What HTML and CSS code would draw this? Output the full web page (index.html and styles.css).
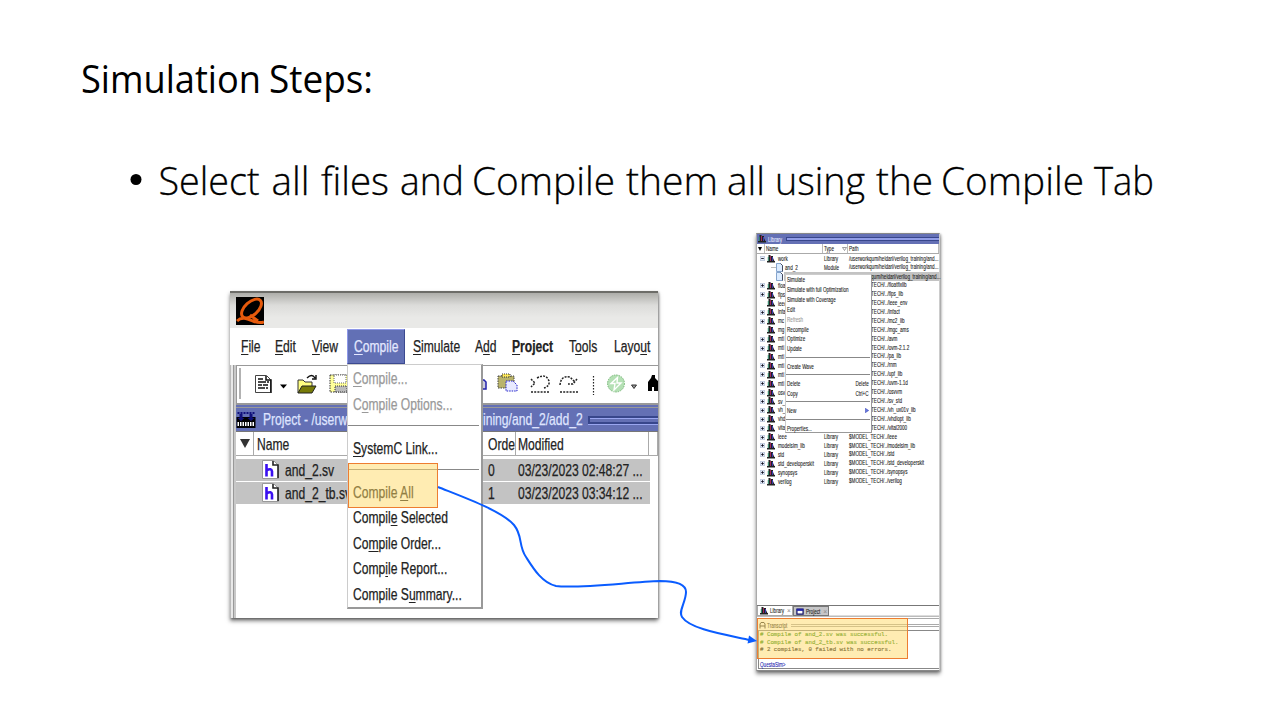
FILE: index.html
```html
<!DOCTYPE html>
<html lang="en">
<head>
<meta charset="utf-8">
<title>Simulation Steps</title>
<link rel="stylesheet" href="styles.css">
</head>
<body>
<svg class="defs" width="0" height="0" aria-hidden="true">
  <symbol id="books" viewBox="0 0 8 8"><path fill="#222" d="M1.500 0h2v7h-2zM4 1h2v6H4zM0 6h8v1.600H0z"/><path fill="#2a8a6a" d="M.8 2h1v4h-1z"/><path fill="#a02860" d="M3 1h1v5H3z"/><path fill="#3a3ab0" d="M5 2h1v4H5z"/><path fill="#222" d="M6 3l1.800 4H6z"/></symbol>
  <symbol id="plus" viewBox="0 0 5 5"><path fill="#e4ebf8" stroke="#9aa9c8" stroke-width=".6" d="M.3.3h4.400v4.400H.3z"/><path stroke="#112" stroke-width=".9" d="M1.200 2.500h2.600M2.500 1.200v2.600"/></symbol>
  <symbol id="minus" viewBox="0 0 5 5"><path fill="#e4ebf8" stroke="#9aa9c8" stroke-width=".6" d="M.3.3h4.400v4.400H.3z"/><path stroke="#112" stroke-width=".9" d="M1.200 2.500h2.600"/></symbol>
  <symbol id="page" viewBox="0 0 7 9"><path fill="#dcecff" stroke="#6a8fc0" stroke-width=".8" d="M.5.5h4l2 2v6h-6z"/><path fill="none" stroke="#334" stroke-width=".8" d="M4.500.5l2 2v6"/></symbol>
  <symbol id="hfile" viewBox="0 0 17 19"><path fill="#fff" stroke="#999" d="M.5.5h11l5 5v13H.5z"/><path fill="none" stroke="#222" stroke-width="1.600" d="M11 1v4h5v13"/><path fill="none" stroke="#3a10f0" stroke-width="2.600" d="M4.500 4v12.500M4.500 10.500q5-3 5.500 1v5"/></symbol>
  <symbol id="factory" viewBox="0 0 19 17"><path fill="#000" d="M0 6h19v11H0z"/><path fill="#6470b5" d="M0 0h19v6H0z"/><path stroke="#10107a" stroke-width="2" stroke-dasharray="2 1" d="M1 2h17"/><path fill="#10107a" d="M3 3h3v4h2l-3.500 3L1 7h2zM13 3h3v4h2l-3.500 3L11 7h2z"/><path stroke="#fff" stroke-width="4" stroke-dasharray="1.500 1" d="M1 13h17"/></symbol>
</svg>
<main class="slide">
  <svg class="title" width="1180" height="60"><text y="42.500" lengthAdjust="spacingAndGlyphs"><tspan x="1" textLength="180" lengthAdjust="spacingAndGlyphs">Simulation</tspan> <tspan x="189" textLength="104" lengthAdjust="spacingAndGlyphs">Steps:</tspan></text></svg>
  <svg class="bullet" width="1100" height="60"><circle cx="7" cy="29.500" r="5.500"/>
    <text x="29.500" y="44.500" textLength="101" lengthAdjust="spacingAndGlyphs">Select</text>
    <text x="142.500" y="44.500" textLength="38" lengthAdjust="spacingAndGlyphs">all</text>
    <text x="192" y="44.500" textLength="68" lengthAdjust="spacingAndGlyphs">files</text>
    <text x="271" y="44.500" textLength="64" lengthAdjust="spacingAndGlyphs">and</text>
    <text x="343" y="44.500" textLength="143" lengthAdjust="spacingAndGlyphs">Compile</text>
    <text x="497" y="44.500" textLength="92" lengthAdjust="spacingAndGlyphs">them</text>
    <text x="598" y="44.500" textLength="38" lengthAdjust="spacingAndGlyphs">all</text>
    <text x="646" y="44.500" textLength="90" lengthAdjust="spacingAndGlyphs">using</text>
    <text x="747" y="44.500" textLength="57" lengthAdjust="spacingAndGlyphs">the</text>
    <text x="812" y="44.500" textLength="143" lengthAdjust="spacingAndGlyphs">Compile</text>
    <text x="965" y="44.500" textLength="60" lengthAdjust="spacingAndGlyphs">Tab</text></svg>

  <div class="figures">
    <section class="window">
      <div class="titlebar"><svg width="28" height="28" viewBox="0 0 28 28"><path d="M0 0h28v28H0z"/><g fill="none" stroke="#e65a0c" stroke-width="3"><ellipse cx="15.500" cy="11.500" rx="12" ry="6.500" transform="rotate(-42 15.500 11.500)"/><path d="M1 24c5-5 11-2 16 0s8 2 11 1M14 18l8 6"/></g></svg></div>
      <nav class="menubar">
        <span><b class="t"><u>F</u>ile</b></span><span><b class="t"><u>E</u>dit</b></span><span><b class="t"><u>V</u>iew</b></span><span class="open"><b class="t"><u>C</u>ompile</b></span><span class="after"><b class="t"><u>S</u>imulate</b></span><span><b class="t">A<u>d</u>d</b></span><span><b class="t bold"><u>P</u>roject</b></span><span><b class="t">T<u>o</u>ols</b></span><span><b class="t">Layo<u>u</u>t</b></span>
      </nav>
      <div class="toolbar">
        <svg width="422" height="36" viewBox="236 367 422 36">
          <path stroke="#999" stroke-width="1.500" d="M240 369v31"/>
          <path fill="#fff" stroke="#444" d="M255.500 376.500h11l4 4v13h-15z"/><path fill="none" stroke="#111" stroke-width="1.500" d="M266 377v4h5v13M258 380h5M258 383h8m1 0h2M258 386h4m1 0h5M258 389h7m1 0h2"/>
          <path d="M280 385.500h7l-3.500 4z"/>
          <path fill="#ffff80" stroke="#333" d="M298 394v-13h5l2 2h7v4"/><path fill="#777b08" stroke="#222" d="M298 394l4-7h14l-4 7z"/><path fill="none" stroke="#111" stroke-width="1.400" d="M307 379q5-5 8 0m1-3v4h-4"/>
          <path fill="#ffff9a" stroke="#333" stroke-dasharray="1.500 1" d="M330 376h20v17h-20z"/><path fill="#fff" stroke="#666" stroke-dasharray="1 1" d="M334 376h12v8h-12z"/><path fill="#bbb" stroke="#333" stroke-dasharray="1 1" d="M335 387h12v6h-12z"/>
          <path fill="#ccd" stroke="#2222aa" stroke-width="1.500" d="M478 381h6l2 2v7h-8z"/>
          <path fill="#b9b36a" stroke="#444" stroke-dasharray="1.500 1" d="M498 377h16v12h-16z"/><path fill="#ffe95a" stroke="#333" stroke-dasharray="1 1" d="M502 375h8v3h-8z"/><path fill="#e8eaff" stroke="#2222cc" stroke-dasharray="1.500 1" d="M506 382h7l4 4v6h-11z"/>
          <g fill="none" stroke="#222" stroke-width="1.500" stroke-dasharray="2 1.200"><path d="M537 379q9-5 12 3 1 5-5 7M531 380l4 4-4 4M531 393h19"/><path d="M560 386q1-10 10-8l5 5M577 380l-4 5h-5M560 393h19"/></g>
          <path stroke="#222" stroke-width="1.200" stroke-dasharray="1.500 1.500" d="M593.500 377v19"/>
          <circle cx="616" cy="384.500" r="8.500" fill="#b4e0b4" stroke="#76b676" stroke-dasharray="1.500 1"/><path fill="#b4e0b4" stroke="#fff" stroke-width="1.400" d="M617.500 378.500l-6.500 6h4l-1 6.500 7-7h-4z"/>
          <path fill="#999" stroke="#333" d="M631.500 386h5l-2.500 3.500z"/>
          <path d="M652 376h3v3l3 3v10h-4v-4h-2v4h-4v-9l3-4z"/>
        </svg>
      </div>
      <div class="project-head"><svg width="20" height="17"><use href="#factory"/></svg><span class="p1"><b class="t">Project - /userw</b></span><span class="p2"><b class="t">ining/and_2/add_2</b></span><i class="grip"></i></div>
      <div class="cols head"><span class="sort"><svg width="10" height="9"><path fill="#333" d="M0 0h10L5 9z"/></svg></span><span class="name"><b class="t">Name</b></span><span class="order"><b class="t">Orde</b></span><span class="mod"><b class="t">Modified</b></span><span></span></div>
      <div class="file"><svg width="17" height="19"><use href="#hfile"/></svg><span class="fname"><b class="t">and_2.sv</b></span><span class="ford"><b class="t">0</b></span><b class="t">03/23/2023 02:48:27 ...</b></div>
      <div class="file"><svg width="17" height="19"><use href="#hfile"/></svg><span class="fname"><b class="t">and_2_tb.sv</b></span><span class="ford"><b class="t">1</b></span><b class="t">03/23/2023 03:34:12 ...</b></div>
      <div class="dropdown">
        <p class="off"><b class="t"><u>C</u>ompile...</b></p><p class="off"><b class="t">C<u>o</u>mpile Options...</b></p><hr>
        <p><b class="t"><u>S</u>ystemC Link...</b></p><hr>
        <p><b class="t">Compile <u>A</u>ll</b></p><p><b class="t">Compil<u>e</u> Selected</b></p><p><b class="t">Co<u>m</u>pile Order...</b></p><p><b class="t">Comp<u>i</u>le Report...</b></p><p><b class="t">Compile S<u>u</u>mmary...</b></p>
      </div>
      <div class="mark mark-all"></div>
    </section>

    <section class="library">
      <div class="lib-title"><svg width="8" height="8"><use href="#books"/></svg><b class="t">Library</b><i class="grip"></i></div>
      <div class="lib-head"><span class="c0"><svg width="4" height="4"><path d="M0 0h4L2 4z"/></svg></span><span class="c1"><b class="t">Name</b></span><span class="c2"><b class="t">Type</b><svg width="5" height="4"><path fill="none" stroke="#777" stroke-width=".7" d="M.5.5h4L2.500 3.500z"/></svg></span><span class="c3"><b class="t">Path</b></span></div>
      <div class="tree">
        <div class="row"><svg class="x"><use href="#minus"/></svg><svg class="k"><use href="#books"/></svg><span class="n"><b class="t">work</b></span><span class="ty"><b class="t">Library</b></span><b class="t">/userworkqum/heidari/verilog_training/and...</b></div>
        <div class="row child"><svg class="pg"><use href="#page"/></svg><span class="n"><b class="t">and_2</b></span><span class="ty"><b class="t">Module</b></span><b class="t">/userworkqum/heidari/verilog_training/and...</b></div>
        <div class="row child sel"><svg class="pg"><use href="#page"/></svg><span class="cut"><b class="t">qum/heidari/verilog_training/and...</b></span></div>
        <div class="row"><svg class="x"><use href="#plus"/></svg><svg class="k"><use href="#books"/></svg><span class="s"><b class="t">floa</b></span><b class="t">TECH/../floatfixlib</b></div>
        <div class="row"><svg class="x"><use href="#plus"/></svg><svg class="k"><use href="#books"/></svg><span class="s"><b class="t">flps</b></span><b class="t">TECH/../flps_lib</b></div>
        <div class="row"><svg class="x"></svg><svg class="k"><use href="#books"/></svg><span class="s"><b class="t">ieee</b></span><b class="t">TECH/../ieee_env</b></div>
        <div class="row"><svg class="x"><use href="#plus"/></svg><svg class="k"><use href="#books"/></svg><span class="s"><b class="t">infa</b></span><b class="t">TECH/../infact</b></div>
        <div class="row"><svg class="x"><use href="#plus"/></svg><svg class="k"><use href="#books"/></svg><span class="s"><b class="t">mc</b></span><b class="t">TECH/../mc2_lib</b></div>
        <div class="row"><svg class="x"></svg><svg class="k"><use href="#books"/></svg><span class="s"><b class="t">mg</b></span><b class="t">TECH/../mgc_ams</b></div>
        <div class="row"><svg class="x"><use href="#plus"/></svg><svg class="k"><use href="#books"/></svg><span class="s"><b class="t">mti</b></span><b class="t">TECH/../avm</b></div>
        <div class="row"><svg class="x"><use href="#plus"/></svg><svg class="k"><use href="#books"/></svg><span class="s"><b class="t">mti</b></span><b class="t">TECH/../ovm-2.1.2</b></div>
        <div class="row"><svg class="x"></svg><svg class="k"><use href="#books"/></svg><span class="s"><b class="t">mti</b></span><b class="t">TECH/../pa_lib</b></div>
        <div class="row"><svg class="x"><use href="#plus"/></svg><svg class="k"><use href="#books"/></svg><span class="s"><b class="t">mti</b></span><b class="t">TECH/../rnm</b></div>
        <div class="row"><svg class="x"><use href="#plus"/></svg><svg class="k"><use href="#books"/></svg><span class="s"><b class="t">mti</b></span><b class="t">TECH/../upf_lib</b></div>
        <div class="row"><svg class="x"><use href="#plus"/></svg><svg class="k"><use href="#books"/></svg><span class="s"><b class="t">mti</b></span><b class="t">TECH/../uvm-1.1d</b></div>
        <div class="row"><svg class="x"><use href="#plus"/></svg><svg class="k"><use href="#books"/></svg><span class="s"><b class="t">osv</b></span><b class="t">TECH/../osvvm</b></div>
        <div class="row"><svg class="x"><use href="#plus"/></svg><svg class="k"><use href="#books"/></svg><span class="s"><b class="t">sv_</b></span><b class="t">TECH/../sv_std</b></div>
        <div class="row"><svg class="x"><use href="#plus"/></svg><svg class="k"><use href="#books"/></svg><span class="s"><b class="t">vh_</b></span><b class="t">TECH/../vh_ux01v_lib</b></div>
        <div class="row"><svg class="x"><use href="#plus"/></svg><svg class="k"><use href="#books"/></svg><span class="s"><b class="t">vhd</b></span><b class="t">TECH/../vhdlopt_lib</b></div>
        <div class="row"><svg class="x"><use href="#plus"/></svg><svg class="k"><use href="#books"/></svg><span class="s"><b class="t">vita</b></span><b class="t">TECH/../vital2000</b></div>
        <div class="row"><svg class="x"><use href="#plus"/></svg><svg class="k"><use href="#books"/></svg><span class="n"><b class="t">ieee</b></span><span class="ty"><b class="t">Library</b></span><b class="t">$MODEL_TECH/../ieee</b></div>
        <div class="row"><svg class="x"><use href="#plus"/></svg><svg class="k"><use href="#books"/></svg><span class="n"><b class="t">modelsim_lib</b></span><span class="ty"><b class="t">Library</b></span><b class="t">$MODEL_TECH/../modelsim_lib</b></div>
        <div class="row"><svg class="x"><use href="#plus"/></svg><svg class="k"><use href="#books"/></svg><span class="n"><b class="t">std</b></span><span class="ty"><b class="t">Library</b></span><b class="t">$MODEL_TECH/../std</b></div>
        <div class="row"><svg class="x"><use href="#plus"/></svg><svg class="k"><use href="#books"/></svg><span class="n"><b class="t">std_developerskit</b></span><span class="ty"><b class="t">Library</b></span><b class="t">$MODEL_TECH/../std_developerskit</b></div>
        <div class="row"><svg class="x"><use href="#plus"/></svg><svg class="k"><use href="#books"/></svg><span class="n"><b class="t">synopsys</b></span><span class="ty"><b class="t">Library</b></span><b class="t">$MODEL_TECH/../synopsys</b></div>
        <div class="row"><svg class="x"><use href="#plus"/></svg><svg class="k"><use href="#books"/></svg><span class="n"><b class="t">verilog</b></span><span class="ty"><b class="t">Library</b></span><b class="t">$MODEL_TECH/../verilog</b></div>
      </div>
      <div class="tabs"><span class="tab"><svg width="8" height="8"><use href="#books"/></svg><b class="t">Library</b><em>×</em></span><span class="tab idle"><svg width="8" height="7" viewBox="0 0 19 17"><path fill="#fff" stroke="#111166" stroke-width="3" d="M2 3h15v12H2z"/><path fill="#22a" d="M2 2h15v5H2z"/></svg><b class="t">Project</b><em>×</em></span></div>
      <div class="tr-head"><svg width="7" height="7"><path fill="none" stroke="#333" d="M1 6.500V2l1-1.500h3L6 2v4.500M1 4h5"/></svg><b class="t">Transcript</b><i class="grip"></i></div>
      <div class="console">
        <p># Compile of and_2.sv was successful.</p><p># Compile of and_2_tb.sv was successful.</p><p class="dark"># 2 compiles, 0 failed with no errors.</p>
        <div class="prompt"><b class="t">QuestaSim&gt;</b></div>
      </div>
      <div class="context">
        <p><b class="t">Simulate</b></p><p><b class="t">Simulate with full Optimization</b></p><p><b class="t">Simulate with Coverage</b></p><p><b class="t">Edit</b></p><p class="off"><b class="t">Refresh</b></p><p><b class="t">Recompile</b></p><p><b class="t">Optimize</b></p><p><b class="t">Update</b></p><hr>
        <p><b class="t">Create Wave</b></p><hr>
        <p><b class="t">Delete</b><b class="t end">Delete</b></p><p><b class="t">Copy</b><b class="t end">Ctrl+C</b></p><hr>
        <p><b class="t">New</b><svg class="end" width="4" height="5"><path fill="#6a7ae0" stroke="#2a3ab0" stroke-width=".5" d="M.3.3L3.700 2.500.3 4.700z"/></svg></p><hr>
        <p><b class="t">Properties...</b></p>
      </div>
      <div class="mark mark-log"></div>
    </section>
  </div>
  <svg class="connector" width="340" height="180" viewBox="430 475 340 180"><path fill="none" stroke="#0a5cff" stroke-width="2" d="M438 487C463 497 502 511 514 525C523 536 518 545 526 557C533 568 542 583 556 586C577 589 630 582 660 581C673 581 686 583 686 592C686 602 678 611 682 617C690 629 722 634 750 640"/><path fill="#0a5cff" d="M757 641l-9.500 2.500 1.500-8z"/></svg>
</main>
</body>
</html>
```

FILE: styles.css
```css
* { box-sizing: border-box; }
body { margin: 0; background: #fff; font-family: "Liberation Sans", Arial, sans-serif; color: #222; }
p { margin: 0; }
svg { display: block; flex: none; }
i { display: block; }
.defs { position: absolute; }
.slide { position: relative; width: 1280px; height: 720px; overflow: hidden; padding: 50px 0 0 80px; }
.title, .bullet { font-family: "Open Sans", "Noto Sans", sans-serif; font-size: 38px; fill: #000; }
.bullet { font-weight: 300; margin: 40px 0 0 49px; }
.bullet text { stroke: #000; stroke-width: .3px; }
.figures { display: flex; align-items: flex-start; margin: 23px 0 0 150px; }

.t { display: inline-block; flex: none; font-weight: 400; white-space: nowrap; transform: scaleX(var(--sq)); transform-origin: 0 50%; -webkit-text-stroke: .25px currentColor; }
.t.bold { font-weight: 700; }
.t u { text-underline-offset: 2px; text-decoration-thickness: 1.3px; }
.off { color: #999; }
.mark { position: absolute; background: rgba(255, 217, 102, .5); border: 1px solid #ed7d31; }
.grip { flex: 1; }

.window { --sq: .757; position: relative; width: 428px; height: 327px; margin-top: 58px; background: #fff; border-top: 2px solid #6c6c68; font-size: 16px; line-height: 20px; box-shadow: 0 3px 4px rgba(0,0,0,.5), 1px 1px 2px rgba(0,0,0,.3); padding-left: 6px; }
.window::before { content: ""; position: absolute; left: 0; top: 0; width: 6px; height: 325px; background: linear-gradient(90deg, #bbb 0 1px, #e8e8e8 1px 3px, #999 3px 4px, #c8c8c8 4px); }
.titlebar { position: relative; height: 35px; margin-left: -6px; padding: 4px 0 0 6px; background: linear-gradient(#adada9, #dcdcda 35%, #e9e9e7 70%); }
.menubar { position: relative; height: 37px; margin-left: -6px; padding-left: 11px; display: grid; grid-template-columns: 34px 37px 35px 58px 70px 37px 57px 45px 40px; background: #fff; }
.menubar span { padding-top: 9px; height: 36px; white-space: nowrap; min-width: 0; }
.menubar .open { margin-top: 1px; height: 35px; padding: 7px 0 0 6px; background: #6270b5; color: #e4e8ff; border: 1px solid #8e98e8; border-right-color: #3c4a90; border-bottom-color: #3c4a90; }
.menubar .after { padding-left: 8px; }
.toolbar { height: 39px; border: 1px solid #999; border-width: 1px 0 1px 1px; overflow: hidden; }
.toolbar svg { margin-left: -1px; }
.project-head { height: 28px; border-top: 4px double #999; border-bottom: 1px solid #777; background: #6470b5; color: #dfe4ff; display: flex; align-items: center; }
.p1 { width: 91px; padding-left: 7px; overflow: hidden; }
.p2 { width: 105px; margin-left: 136px; }
.p1, .p2 { flex: none; white-space: nowrap; }
.project-head .grip { height: 8px; border: 2px solid #38468c; border-right: 0; box-shadow: inset 0 1px #9aa6f0, 0 1px #9aa6f0; flex: none; width: 70px; }
.head { display: grid; grid-template-columns: 18px 229px 33px 133px 9px; height: 24px; }
.head span { border-right: 1px solid #aaa; border-bottom: 1px solid #aaa; overflow: hidden; padding: 3px 0 0 3px; min-width: 0; }
.head .sort { padding: 7px 0 0 4px; }
.head .order { padding-left: 5px; }
.head .mod { padding-left: 2px; }
.file { display: flex; align-items: center; width: 414px; height: 21.500px; margin-bottom: 1.500px; background: #c3c3c3; padding-left: 26px; }
.head + .file { margin-top: 3px; }
.fname { width: 69px; margin-left: 6px; white-space: nowrap; flex: none; }
.ford { width: 30px; margin-left: 134px; flex: none; }
.file .t { line-height: 20px; position: relative; top: 1px; }
.dropdown { position: absolute; left: 117px; top: 71px; width: 136px; height: 245px; background: #fff; border: 1px solid #ccc; border-right: 2px solid #999; border-bottom: 2px solid #999; padding: 1px 0 0 5px; }
.dropdown p { height: 25.500px; line-height: 25px; }
.dropdown hr { margin: 8px 2px 9.500px -5px; border: 0; border-top: 1.500px solid #888; }
.mark-all { left: 118px; top: 170px; width: 90px; height: 45px; }

.library { --sq: .71; position: relative; width: 184px; height: 438px; margin-left: 98px; background: #fff; border: 1px solid #888; border-left: 1px solid #aaa; border-right: 1px solid #ccc; font-size: 6.500px; line-height: 9px; box-shadow: 0 3px 4px rgba(0,0,0,.45), 1px 1px 2px rgba(0,0,0,.25); color: #222; }
.library .t { -webkit-text-stroke-width: .1px; }
.lib-title { height: 10px; background: #6470b5; color: #e6eaff; display: flex; align-items: center; padding-left: 1px; gap: 2px; }
.lib-title .grip { height: 4px; border: 1px solid #38468c; border-right: 0; margin-left: -4px; background: #909ce6; }
.lib-head { display: grid; grid-template-columns: 8px 58px 25px 91px; height: 10px; border-bottom: 1px solid #aaa; }
.lib-head span { border-right: 1px solid #bbb; padding-left: 1px; display: flex; align-items: center; justify-content: space-between; min-width: 0; height: 9px; }
.tree { height: 351px; padding-top: .5px; }
.row { height: 8.920px; display: flex; align-items: center; padding-left: 3px; white-space: nowrap; }
.row .t { line-height: 8.900px; }
.x { width: 5px; height: 5px; }
.k { width: 8px; height: 8px; margin: 0 2px 0 2px; }
.n { width: 46px; flex: none; margin-left: 1px; }
.ty { width: 25px; flex: none; }
.s { width: 92.500px; flex: none; margin-left: 1px; }
.child { padding-left: 19px; background: linear-gradient(#bbb, #bbb) 14px 50% / 5px 1px no-repeat; }
.child .pg { width: 7px; height: 9px; }
.child .n { width: 39px; margin-left: 2px; }
.row.sel { background: linear-gradient(90deg, transparent 27px, #c3c3c3 27px); }
.cut { margin-left: 88px; }
.tabs { display: flex; height: 12px; border-top: 1.500px solid #777; background: linear-gradient(#fff 9px, #bbb 10px); }
.tab { display: flex; align-items: center; gap: 2px; width: 36px; height: 10px; padding-left: 2px; background: #fff; border: 1px solid #aaa; border-top: 0; }
.tab em { font-style: normal; color: #888; margin-left: -5px; }
.tab.idle { background: #c6c6c8; border: 1px solid #777; }
.tr-head { height: 12px; margin-top: 1px; border-top: 1px solid #aaa; display: flex; align-items: center; padding: 2px 0 0 2px; gap: 1px; }
.tr-head .grip { height: 3px; margin-left: -6px; border: 1px solid #aaa; border-width: 1px 0; }
.console { border: 1px solid #888; border-width: 1px 0 1px 1px; margin-left: 1px; height: 39px; padding: 0 0 0 1px; font: 5.780px/7.500px "Liberation Mono", monospace; color: #2f8a08; -webkit-text-stroke: .15px currentColor; white-space: nowrap; }
.console .dark { color: #111; }
.prompt { font: 6.500px/8px "Liberation Sans", sans-serif; color: #2424b0; margin-top: 7px; }
.context { position: absolute; left: 28px; top: 40px; width: 87px; height: 159px; background: #fff; border: 1px solid #ccc; border-right-color: #999; border-bottom-color: #999; padding-left: 1px; }
.context p { height: 9.850px; display: flex; align-items: center; position: relative; }
.context hr { margin: 3px 1px 3.500px -1px; border: 0; border-top: 1px solid #888; }
.end { margin-left: auto; transform-origin: 100% 50%; margin-right: 2px; }
.mark-log { left: 0; top: 384px; width: 151px; height: 41px; }
.connector { position: absolute; left: 430px; top: 475px; }
```
